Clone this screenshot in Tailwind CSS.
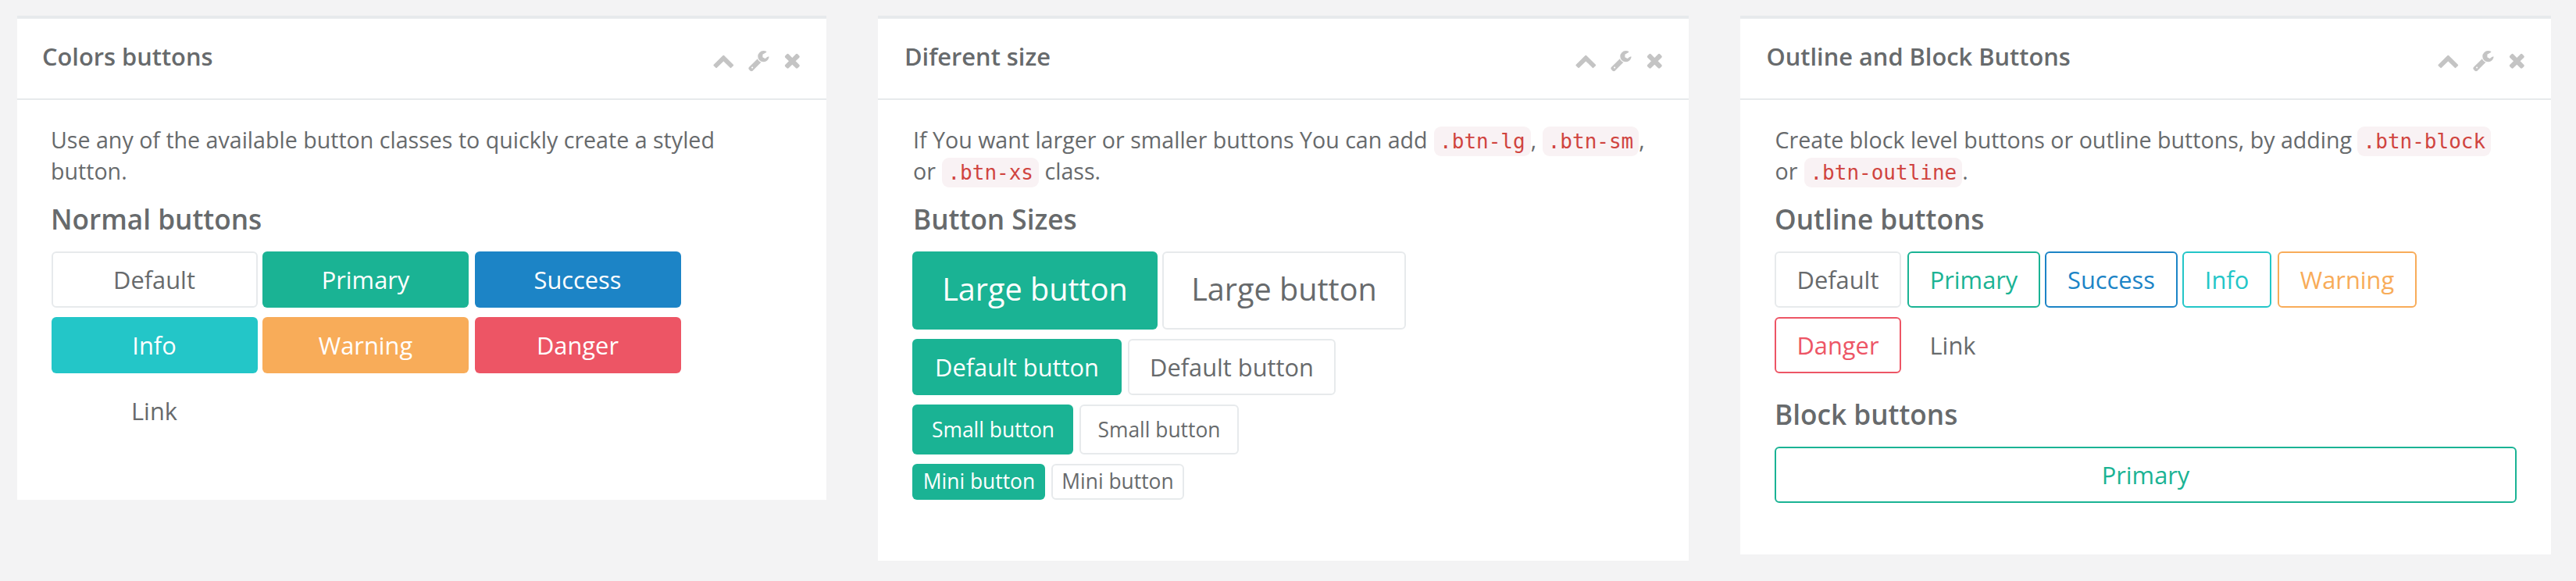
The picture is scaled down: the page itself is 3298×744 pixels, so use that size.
<!DOCTYPE html>
<html lang="en">
<head>
<meta charset="utf-8">
<title>Buttons</title>
<script src="https://cdn.jsdelivr.net/npm/@tailwindcss/browser@4"></script>
</head>
<body class="bg-[#f3f3f4] text-[#676a6c] font-['Open_Sans',sans-serif] h-[744px] overflow-hidden">

<svg class="hidden">
  <symbol id="chevron" viewBox="0 0 1792 1792"><path d="M1683 1331l-166 165q-19 19-45 19t-45-19l-531-531-531 531q-19 19-45 19t-45-19l-166-165q-19-19-19-45.500t19-45.500l742-741q19-19 45-19t45 19l742 741q19 19 19 45.500t-19 45.500z"/></symbol>
  <symbol id="wrench" viewBox="0 0 1792 1792"><path d="M448 1472q0-26-19-45t-45-19-45 19-19 45 19 45 45 19 45-19 19-45zm644-420l-682 682q-37 37-90 37-52 0-91-37l-106-108q-38-36-38-90 0-53 38-91l681-681q39 98 114.500 173.500t173.500 114.500zm634-435q0 39-23 106-47 134-164.500 217.500t-258.500 83.500q-185 0-316.500-131.500t-131.500-316.500 131.500-316.500 316.500-131.500q58 0 121.500 16.500t107.500 46.500q16 11 16 28t-16 28l-293 169v224l193 107q5-3 79-48.500t135.500-81 70.500-35.500q15 0 23.500 10t8.500 25z"/></symbol>
  <symbol id="times" viewBox="0 0 1792 1792"><path d="M1490 1322q0 40-28 68l-136 136q-28 28-68 28t-68-28l-294-294-294 294q-28 28-68 28t-68-28l-136-136q-28-28-28-68t28-68l294-294-294-294q-28-28-28-68t28-68l136-136q28-28 68-28t68 28l294 294 294-294q28-28 68-28t68 28l136 136q28 28 28 68t-28 68l-294 294 294 294q28 28 28 68z"/></symbol>
</svg>

<main class="flex items-start pt-5 pl-[22px]">

  <!-- Colors buttons -->
  <section class="w-[1036px] h-[620px] bg-white border-t-4 border-[#e7eaec] shrink-0">
    <header class="h-[104px] border-b-2 border-[#e7eaec] flex items-start justify-between pl-8 pr-[29px]">
      <h5 class="mt-[31px] text-[30.8px] leading-[34px] font-semibold whitespace-nowrap">Colors buttons</h5>
      <div class="mt-[39.4px] flex text-[#c4c4c4]">
        <svg class="size-[28.6px] mr-[17.1px] fill-current"><use href="#chevron"/></svg>
        <svg class="size-[28.6px] mr-[14.6px] fill-current"><use href="#wrench"/></svg>
        <svg class="size-[28.6px] fill-current"><use href="#times"/></svg>
      </div>
    </header>
    <div class="px-[44px] pt-[31px]">
      <p class="-ml-px text-[28.6px] leading-[40px] whitespace-nowrap">Use any of the available button classes to quickly create a styled<br>button.</p>
      <h3 class="-ml-px mt-[21px] text-[35.2px] leading-[40px] font-semibold">Normal buttons</h3>
      <div class="mt-[22px] grid grid-cols-[264px_264px_264px] gap-y-3 text-[30.8px] text-white">
        <button class="h-[72px] pr-px rounded-[6px] border-2 border-[#e7eaec] text-[#676a6c]">Default</button>
        <button class="h-[72px] rounded-[6px] bg-[#1ab394] ml-[6px] mr-[-6px]">Primary</button>
        <button class="h-[72px] pr-px rounded-[6px] bg-[#1c84c6] ml-[14px] mr-[-14px]">Success</button>
        <button class="h-[72px] pr-px rounded-[6px] bg-[#23c6c8]">Info</button>
        <button class="h-[72px] rounded-[6px] bg-[#f8ac59] ml-[6px] mr-[-6px]">Warning</button>
        <button class="h-[72px] pr-px rounded-[6px] bg-[#ed5565] ml-[14px] mr-[-14px]">Danger</button>
        <button class="h-[72px] pr-px text-[#676a6c]">Link</button>
      </div>
    </div>
  </section>

  <!-- Button sizes -->
  <section class="ml-[66px] w-[1038px] h-[698px] bg-white border-t-4 border-[#e7eaec] shrink-0">
    <header class="h-[104px] border-b-2 border-[#e7eaec] flex items-start justify-between pl-[34px] pr-[29px]">
      <h5 class="mt-[31px] text-[30.8px] leading-[34px] font-semibold whitespace-nowrap">Diferent size</h5>
      <div class="mt-[39.4px] flex text-[#c4c4c4]">
        <svg class="size-[28.6px] mr-[17.1px] fill-current"><use href="#chevron"/></svg>
        <svg class="size-[28.6px] mr-[14.6px] fill-current"><use href="#wrench"/></svg>
        <svg class="size-[28.6px] fill-current"><use href="#times"/></svg>
      </div>
    </header>
    <div class="px-[44px] pt-[31px]">
      <p class="pl-px text-[28.6px] leading-[40px] whitespace-nowrap">If You want larger or smaller buttons You can add <code class="ml-px font-['DejaVu_Sans_Mono',monospace] text-[26px] leading-none text-[#d0443f] bg-[#f9f2f4] rounded-[9px] px-[7.1px] py-[4px]">.btn-lg</code>, <code class="font-['DejaVu_Sans_Mono',monospace] text-[26px] leading-none text-[#d0443f] bg-[#f9f2f4] rounded-[9px] px-[7.1px] py-[4px]">.btn-sm</code>,<br>or <code class="ml-px font-['DejaVu_Sans_Mono',monospace] text-[26px] leading-none text-[#d0443f] bg-[#f9f2f4] rounded-[9px] px-[7.1px] py-[4px]">.btn-xs</code> class.</p>
      <h3 class="pl-px mt-[21px] text-[35.2px] leading-[40px] font-semibold">Button Sizes</h3>
      <div class="mt-[22px] flex flex-col gap-3">
        <div class="flex gap-[6px] text-[39.6px]">
          <button class="w-[314px] h-[100px] pb-[2px] rounded-[6px] bg-[#1ab394] text-white">Large button</button>
          <button class="w-[312px] h-[100px] pb-[2px] rounded-[6px] border-2 border-[#e7eaec]">Large button</button>
        </div>
        <div class="flex gap-2 text-[30.8px]">
          <button class="w-[268px] h-[72px] rounded-[6px] bg-[#1ab394] text-white">Default button</button>
          <button class="w-[266px] h-[72px] rounded-[6px] border-2 border-[#e7eaec]">Default button</button>
        </div>
        <div class="flex gap-2 text-[26.4px]">
          <button class="w-[206px] h-[64px] pt-px pl-px rounded-[6px] bg-[#1ab394] text-white">Small button</button>
          <button class="w-[204px] h-[64px] pt-px rounded-[6px] border-2 border-[#e7eaec]">Small button</button>
        </div>
        <div class="flex gap-2 text-[26.4px] leading-[40px]">
          <button class="w-[170px] h-[46px] pb-[2px] pl-px rounded-[6px] bg-[#1ab394] text-white">Mini button</button>
          <button class="w-[170px] h-[46px] pb-[2px] rounded-[6px] border-2 border-[#e7eaec]">Mini button</button>
        </div>
      </div>
    </div>
  </section>

  <!-- Outline and block buttons -->
  <section class="ml-[66px] w-[1038px] h-[690px] bg-white border-t-4 border-[#e7eaec] shrink-0">
    <header class="h-[104px] border-b-2 border-[#e7eaec] flex items-start justify-between pl-[33.5px] pr-[29px]">
      <h5 class="mt-[31px] text-[30.8px] leading-[34px] font-semibold whitespace-nowrap">Outline and Block Buttons</h5>
      <div class="mt-[39.4px] flex text-[#c4c4c4]">
        <svg class="size-[28.6px] mr-[17.1px] fill-current"><use href="#chevron"/></svg>
        <svg class="size-[28.6px] mr-[14.6px] fill-current"><use href="#wrench"/></svg>
        <svg class="size-[28.6px] fill-current"><use href="#times"/></svg>
      </div>
    </header>
    <div class="px-[44px] pt-[31px]">
      <p class="pl-[0.5px] text-[28.6px] leading-[40px] whitespace-nowrap">Create block level buttons or outline buttons, by adding <code class="font-['DejaVu_Sans_Mono',monospace] text-[26px] leading-none text-[#d0443f] bg-[#f9f2f4] rounded-[9px] px-[7.1px] py-[4px]">.btn-block</code><br>or <code class="ml-[1.5px] font-['DejaVu_Sans_Mono',monospace] text-[26px] leading-none text-[#d0443f] bg-[#f9f2f4] rounded-[9px] px-[7.1px] py-[4px]">.btn-outline</code>.</p>
      <h3 class="mt-[21px] text-[35.2px] leading-[40px] font-semibold">Outline buttons</h3>
      <div class="mt-[22px] flex flex-col gap-3 text-[30.8px]">
        <div class="flex">
          <button class="w-[162px] h-[72px] rounded-[6px] border-2 border-[#e7eaec]">Default</button>
          <button class="ml-2 w-[170px] h-[72px] rounded-[6px] border-2 border-[#1ab394] text-[#1ab394]">Primary</button>
          <button class="ml-[6px] w-[170px] h-[72px] rounded-[6px] border-2 border-[#1c84c6] text-[#1c84c6]">Success</button>
          <button class="ml-[6px] w-[114px] h-[72px] rounded-[6px] border-2 border-[#23c6c8] text-[#23c6c8]">Info</button>
          <button class="ml-2 w-[178px] h-[72px] rounded-[6px] border-2 border-[#f8ac59] text-[#f8ac59]">Warning</button>
        </div>
        <div class="flex gap-2">
          <button class="w-[162px] h-[72px] rounded-[6px] border-2 border-[#ed5565] text-[#ed5565]">Danger</button>
          <button class="w-[116px] h-[72px]">Link</button>
        </div>
      </div>
      <h3 class="mt-8 text-[35.2px] leading-[40px] font-semibold">Block buttons</h3>
      <button class="mt-[22px] block w-full h-[72px] rounded-[6px] border-2 border-[#1ab394] text-[30.8px] text-[#1ab394]">Primary</button>
    </div>
  </section>

</main>
</body>
</html>
